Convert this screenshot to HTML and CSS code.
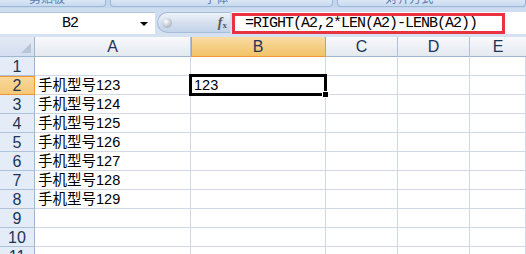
FILE: index.html
```html
<!DOCTYPE html>
<html lang="zh-CN">
<head>
  <meta charset="UTF-8">
  <title>Excel - RIGHT/LENB</title>
  <link rel="stylesheet" href="styles.css">
</head>
<body>

  <div class="ribbon">
    <div class="group group-clip"><span>剪贴板</span></div>
    <div class="group group-font"><span>字体</span></div>
    <div class="group group-align"><span>对齐方式</span></div>
  </div>

  <div class="formula-bar">
    <div class="name-box">
      <span class="name">B2</span>
      <span class="arrow"></span>
    </div>
    <div class="fx-pill">
      <span class="knob"></span>
      <span class="fx"><i>f</i><sub>x</sub></span>
    </div>
    <div class="formula-input">
      <div class="highlight">=RIGHT(A2,2*LEN(A2)-LENB(A2))</div>
    </div>
  </div>

  <div class="sheet">
    <div class="corner"><span class="tri"></span></div>
    <div class="col-head">A</div>
    <div class="col-head active">B</div>
    <div class="col-head">C</div>
    <div class="col-head">D</div>
    <div class="col-head last">E</div>

    <div class="row-head">1</div>
    <div class="cell"></div><div class="cell"></div><div class="cell"></div><div class="cell"></div><div class="cell"></div>

    <div class="row-head active">2</div>
    <div class="cell">手机型号123</div>
    <div class="cell selected">123<span class="outline"><span class="handle"></span></span></div>
    <div class="cell"></div><div class="cell"></div><div class="cell"></div>

    <div class="row-head">3</div>
    <div class="cell">手机型号124</div><div class="cell"></div><div class="cell"></div><div class="cell"></div><div class="cell"></div>

    <div class="row-head">4</div>
    <div class="cell">手机型号125</div><div class="cell"></div><div class="cell"></div><div class="cell"></div><div class="cell"></div>

    <div class="row-head">5</div>
    <div class="cell">手机型号126</div><div class="cell"></div><div class="cell"></div><div class="cell"></div><div class="cell"></div>

    <div class="row-head">6</div>
    <div class="cell">手机型号127</div><div class="cell"></div><div class="cell"></div><div class="cell"></div><div class="cell"></div>

    <div class="row-head">7</div>
    <div class="cell">手机型号128</div><div class="cell"></div><div class="cell"></div><div class="cell"></div><div class="cell"></div>

    <div class="row-head">8</div>
    <div class="cell">手机型号129</div><div class="cell"></div><div class="cell"></div><div class="cell"></div><div class="cell"></div>

    <div class="row-head">9</div>
    <div class="cell"></div><div class="cell"></div><div class="cell"></div><div class="cell"></div><div class="cell"></div>

    <div class="row-head">10</div>
    <div class="cell"></div><div class="cell"></div><div class="cell"></div><div class="cell"></div><div class="cell"></div>

    <div class="row-head">11</div>
    <div class="cell"></div><div class="cell"></div><div class="cell"></div><div class="cell"></div><div class="cell"></div>
  </div>

</body>
</html>
```

FILE: styles.css
```css
body {
  margin: 0;
  width: 526px;
  height: 254px;
  overflow: hidden;
  background: #fff;
  font-family: "Liberation Sans", "Noto Sans CJK SC", sans-serif;
}

/* ribbon group bottoms, mostly scrolled off */
.ribbon {
  display: flex;
  height: 8px;
  background: #c4d6ec;
  overflow: hidden;
}

.group {
  height: 7px;
  box-sizing: border-box;
  background: linear-gradient(#d9e6f5, #c9dbf0);
  border: 1px solid #9db7d8;
  border-top: none;
  border-radius: 0 0 4px 4px;
  overflow: hidden;
  text-align: center;
}

.group span {
  display: block;
  margin-top: -7px;
  font-size: 12px;
  line-height: 12px;
  color: #5a7fb5;
}

.group-clip {
  width: 114px;
  margin-left: -2px;
}

.group-clip span {
  text-indent: -10px;
}

.group-font {
  width: 235px;
  margin-left: 4px;
}

.group-font span {
  text-indent: -10px;
}

.group-align {
  width: 200px;
  margin-left: 4px;
}

.group-align span {
  text-indent: -44px;
}

/* formula bar */
.formula-bar {
  display: flex;
  height: 22px;
  padding: 4px 0 3px;
  background: linear-gradient(#cddcef, #d6e2f1);
}

.name-box {
  width: 155px;
  display: flex;
  align-items: center;
  background: #fff;
  border-top: 1px solid #b4c5db;
  box-sizing: border-box;
}

.name {
  width: 140px;
  text-align: center;
  font-family: "Liberation Mono", monospace;
  font-size: 15px;
  letter-spacing: -1px;
  color: #000;
}

.arrow {
  width: 0;
  height: 0;
  border-left: 4px solid transparent;
  border-right: 4px solid transparent;
  border-top: 4px solid #000;
}

.fx-pill {
  width: 73px;
  margin-left: 2px;
  height: 21px;
  display: flex;
  align-items: center;
  justify-content: space-between;
  box-sizing: border-box;
  padding: 0 3px 0 4px;
  border-radius: 11px 0 0 11px;
  border: 1px solid #a7bcd8;
  border-right: none;
  background: linear-gradient(#eef3fa, #d3dfee 55%, #c3d3e8);
}

.knob {
  width: 10px;
  height: 10px;
  border-radius: 50%;
  background: radial-gradient(circle at 40% 35%, #ffffff, #b9c2cd 60%, #8d98a6);
}

.fx {
  font-family: "Liberation Serif", serif;
  font-size: 14px;
  color: #5b5b5b;
  font-weight: bold;
}

.fx sub {
  font-size: 9px;
  vertical-align: -1px;
}

.formula-input {
  flex: 1;
  background: #fff;
  margin-left: 2px;
  padding-top: 1px;
}

.highlight {
  width: 273px;
  height: 21px;
  box-sizing: border-box;
  border: 3px solid #ea3340;
  padding-left: 10px;
  font-family: "Liberation Mono", monospace;
  font-size: 15px;
  letter-spacing: -1px;
  line-height: 15px;
  color: #000;
}

/* sheet grid */
.sheet {
  display: grid;
  grid-template-columns: 35px 156px 135px 72px 72px 1fr;
  grid-template-rows: 20px repeat(11, 19px);
}

.sheet > div {
  box-sizing: border-box;
  border-right: 1px solid #d0d7e5;
  border-bottom: 1px solid #d0d7e5;
}

.corner {
  position: relative;
  background: linear-gradient(#e3eaf4, #d3def0);
  border-right-color: #9eb6ce !important;
  border-bottom-color: #9eb6ce !important;
}

.tri {
  position: absolute;
  right: 3px;
  bottom: 3px;
  width: 0;
  height: 0;
  border-left: 10px solid transparent;
  border-bottom: 10px solid #b9c6d8;
}

.col-head {
  background: linear-gradient(#f8f9fb, #e4e9f0);
  border-right-color: #b2c2d6 !important;
  border-bottom-color: #9eb6ce !important;
  text-align: center;
  font-size: 16px;
  line-height: 20px;
  color: #1b3557;
}

.col-head.active {
  background: linear-gradient(#f9dba4, #f2c367);
  border-bottom-color: #f29536 !important;
  border-right-color: #f29536 !important;
  box-shadow: inset 1px 0 0 #f29536;
}

.col-head.last {
  border-right: none;
}

.row-head {
  background: #e4ecf7;
  border-right-color: #9eb6ce !important;
  border-bottom-color: #aec2da !important;
  text-align: center;
  font-size: 16px;
  line-height: 19px;
  color: #1b3557;
}

.row-head.active {
  background: linear-gradient(#f9d99d, #f4c877);
  border-right-color: #f29536 !important;
  border-bottom-color: #f29536 !important;
  box-shadow: inset 0 1px 0 #f29536;
}

.cell {
  padding-left: 3px;
  font-size: 14.5px;
  line-height: 19px;
  color: #000;
  white-space: nowrap;
}

.selected {
  position: relative;
}

.outline {
  position: absolute;
  top: -2px;
  left: -2px;
  right: -2px;
  bottom: -2px;
  border: 3px solid #000;
  box-sizing: border-box;
}

.handle {
  position: absolute;
  right: -5px;
  bottom: -5px;
  width: 5px;
  height: 5px;
  background: #000;
  border: 1px solid #fff;
}
```
